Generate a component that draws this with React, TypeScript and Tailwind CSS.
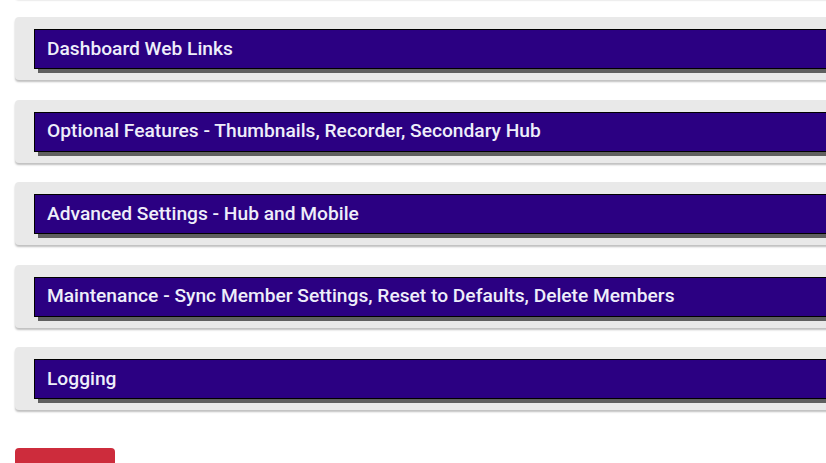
const sections = [
  '',
  'Dashboard Web Links',
  'Optional Features - Thumbnails, Recorder, Secondary Hub',
  'Advanced Settings - Hub and Mobile',
  'Maintenance - Sync Member Settings, Reset to Defaults, Delete Members',
  'Logging',
];

function Section({ title }: { title: string }) {
  return (
    <div className="mb-[19.5px] rounded bg-[#e9e9e9] pl-[19px] pt-3 pb-[11px] shadow-[0_2px_2px_rgba(0,0,0,0.25)]">
      <div className="flex h-10 items-center border border-black bg-[#2b0082] pl-3 text-[19.2px] font-medium text-[#eeeefa] shadow-[4px_4px_0_#5f5f5f]">
        {title}
      </div>
    </div>
  );
}

export default function App() {
  return (
    <div className="h-[463px] w-[826px] overflow-hidden bg-white font-['Roboto',sans-serif]">
      <div className="-mt-[65.5px] ml-[15px] w-[900px]">
        {sections.map((s, i) => (
          <Section key={i} title={s} />
        ))}
        <button aria-label="Save" className="mt-[18px] h-10 w-[100px] rounded bg-[#cd2c3c]" />
      </div>
    </div>
  );
}
